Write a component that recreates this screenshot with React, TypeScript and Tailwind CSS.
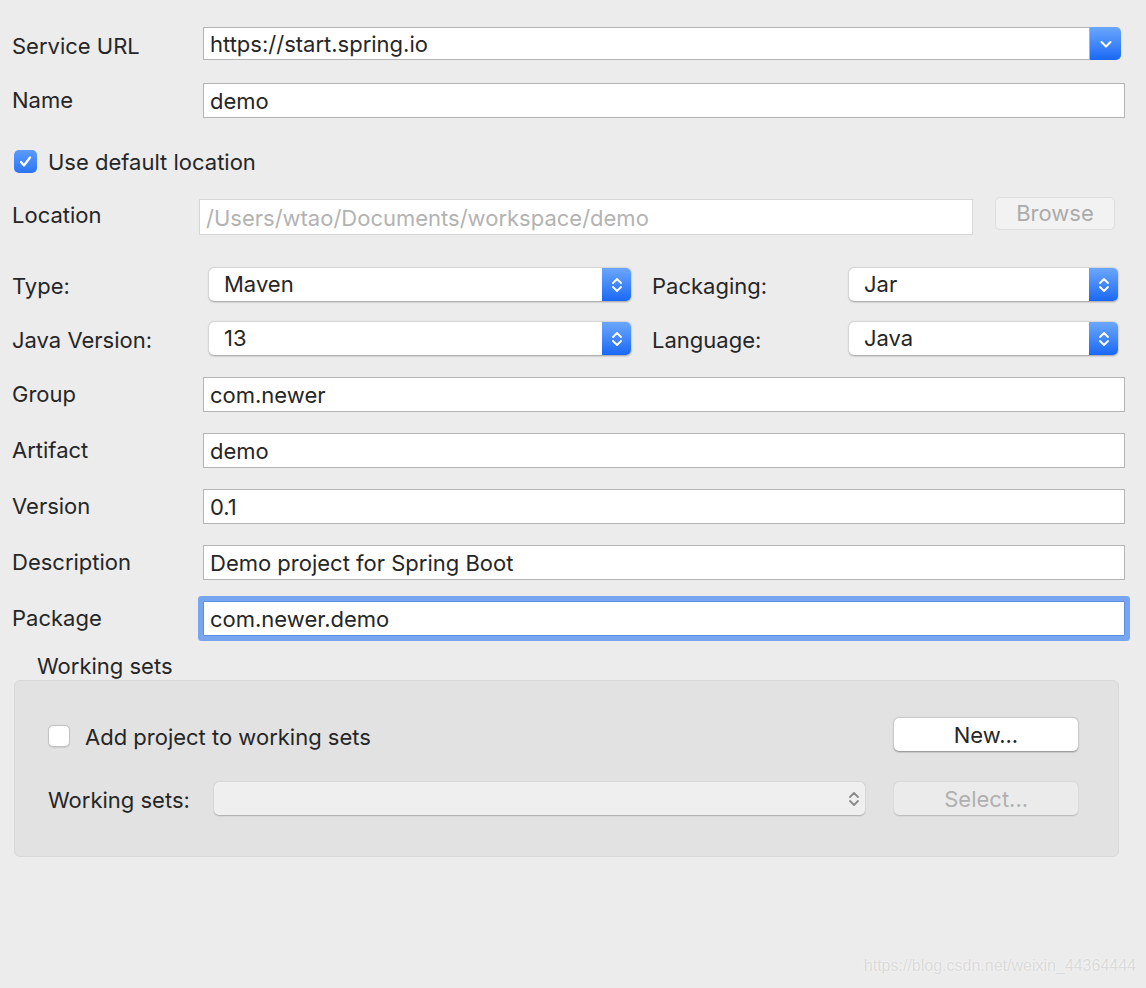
import React from 'react'

const UpDown = ({ color = '#ffffff' }: { color?: string }) => (
  <svg width="14" height="20" viewBox="0 0 14 20" fill="none">
    <path d="M3 8 L7 4 L11 8" stroke={color} strokeWidth="1.8" strokeLinecap="round" strokeLinejoin="round" />
    <path d="M3 12 L7 16 L11 12" stroke={color} strokeWidth="1.8" strokeLinecap="round" strokeLinejoin="round" />
  </svg>
)

function Popup({ value, width }: { value: string; width: string }) {
  return (
    <div className={`${width} h-[33px] flex bg-white rounded-[5px] shadow-[0_0.5px_2px_rgba(0,0,0,0.35)] overflow-hidden`}>
      <div className="flex-1 flex items-center pl-[15px]">{value}</div>
      <div className="w-[29px] flex items-center justify-center bg-gradient-to-b from-[#6aa6fc] to-[#1868f5]">
        <UpDown />
      </div>
    </div>
  )
}

function TextField({ value }: { value: string }) {
  return (
    <div className="w-[922px] h-[35px] flex items-center bg-white border border-[#b4b4b4] pl-[6px] pt-[2px]">
      {value}
    </div>
  )
}

function Row({ label, value }: { label: string; value: string }) {
  return (
    <div className="flex items-center h-[35px] mt-[21px]">
      <div className="w-[203px] pl-[12px]">{label}</div>
      <TextField value={value} />
    </div>
  )
}

export default function App() {
  return (
    <div className="relative w-[1146px] h-[988px] bg-[#ececec] pt-[27px] text-[22px] leading-[27px] text-[#262626] font-['Inter',sans-serif]">
      {/* Service URL */}
      <div className="flex items-center h-[33px]">
        <div className="w-[203px] pl-[12px] pt-[5px]">Service URL</div>
        <div className="w-[918px] h-[33px] flex">
          <div className="flex-1 flex items-center bg-white border border-[#b4b4b4] pl-[6px] pt-[2px]">https://start.spring.io</div>
          <div className="w-[31px] flex items-center justify-center rounded-r-[5px] bg-gradient-to-b from-[#6aa6fc] to-[#1868f5]">
            <svg width="14" height="14" viewBox="0 0 14 14" fill="none">
              <path d="M2.5 5 L7 9.5 L11.5 5" stroke="#fff" strokeWidth="2" strokeLinecap="round" strokeLinejoin="round" />
            </svg>
          </div>
        </div>
      </div>

      {/* Name */}
      <div className="flex items-center h-[35px] mt-[23px]">
        <div className="w-[203px] pl-[12px]">Name</div>
        <TextField value="demo" />
      </div>

      {/* Use default location */}
      <div className="flex items-center mt-[32px] pl-[14px] h-[23px]">
        <div className="w-[23px] h-[23px] rounded-[5px] bg-gradient-to-b from-[#5b9bfb] to-[#2a74f5] flex items-center justify-center">
          <svg width="15" height="15" viewBox="0 0 15 15" fill="none">
            <path d="M3 8 L6 11.5 L12 3.5" stroke="#fff" strokeWidth="2.2" strokeLinecap="round" strokeLinejoin="round" />
          </svg>
        </div>
        <span className="ml-[11px] pt-[1px]">Use default location</span>
      </div>

      {/* Location */}
      <div className="flex items-start h-[37px] mt-[24px]">
        <div className="w-[199px] pl-[12px] h-[37px] flex items-center">Location</div>
        <div className="w-[774px] h-[36px] mt-[2px] flex items-center bg-white border border-[#d6d6d6] pl-[6px] pt-[2px] text-[#b3b3b3]">
          /Users/wtao/Documents/workspace/demo
        </div>
        <div className="ml-[22px] w-[120px] h-[33px] flex items-center justify-center rounded-[5px] bg-[#f2f2f2] border border-[#dedede] text-[#ababab]">
          Browse
        </div>
      </div>

      {/* Type / Packaging */}
      <div className="flex items-center h-[33px] mt-[34px]">
        <div className="w-[209px] pl-[12px] pt-[4px]">Type:</div>
        <Popup value="Maven" width="w-[422px]" />
        <div className="w-[218px] pl-[21px] pt-[4px]">Packaging:</div>
        <Popup value="Jar" width="w-[269px]" />
      </div>

      {/* Java Version / Language */}
      <div className="flex items-center h-[33px] mt-[21px]">
        <div className="w-[209px] pl-[12px] pt-[4px]">Java Version:</div>
        <Popup value="13" width="w-[422px]" />
        <div className="w-[218px] pl-[21px] pt-[4px]">Language:</div>
        <Popup value="Java" width="w-[269px]" />
      </div>

      <div className="h-[1px]" />
      <Row label="Group" value="com.newer" />
      <Row label="Artifact" value="demo" />
      <Row label="Version" value="0.1" />
      <Row label="Description" value="Demo project for Spring Boot" />

      {/* Package (focused) */}
      <div className="flex items-center h-[35px] mt-[21px]">
        <div className="w-[203px] pl-[12px]">Package</div>
        <div className="w-[922px] h-[35px] flex items-center bg-white border border-[#5b8fe2] rounded-[1px] pl-[6px] pt-[2px] shadow-[0_0_0_5px_#78a5ef]">
          com.newer.demo
        </div>
      </div>

      {/* Working sets */}
      <div className="pl-[37px] mt-[17px] h-[27px] leading-[27px]">Working sets</div>
      <div className="mx-[14px] w-[1105px] h-[177px] bg-[#e2e2e2] border border-[#d9d9d9] rounded-[6px] pt-[37px] pl-[33px] pr-[40px]">
        <div className="flex items-center justify-between h-[33px]">
          <div className="flex items-center pt-[2px]">
            <div className="w-[22px] h-[22px] rounded-[5px] bg-white border border-[#c2c2c2] shadow-[0_0.5px_1px_rgba(0,0,0,0.1)]" />
            <span className="ml-[15px] pt-[3px]">Add project to working sets</span>
          </div>
          <div className="w-[184px] h-[33px] flex items-center justify-center pt-[2px] bg-white rounded-[5px] shadow-[0_0.5px_2px_rgba(0,0,0,0.4)]">
            New...
          </div>
        </div>
        <div className="flex items-center mt-[31px] h-[33px]">
          <div className="w-[166px] pt-[4px]">Working sets:</div>
          <div className="w-[653px] h-[33px] flex items-center justify-end pr-[4px] bg-[#efefef] rounded-[5px] shadow-[0_0.5px_1.5px_rgba(0,0,0,0.25)]">
            <UpDown color="#8a8a8a" />
          </div>
          <div className="ml-[29px] w-[184px] h-[33px] flex items-center justify-center pt-[2px] bg-[#ebebeb] rounded-[5px] shadow-[0_0.5px_1.5px_rgba(0,0,0,0.2)] text-[#b0b0b0]">
            Select...
          </div>
        </div>
      </div>

      {/* watermark */}
      <div className="absolute right-[10px] bottom-[9px] text-[16px] text-[#dadada] font-['Liberation_Sans',Arial,sans-serif] [text-shadow:0_0_2px_#ffffff]">
        https://blog.csdn.net/weixin_44364444
      </div>
    </div>
  )
}
